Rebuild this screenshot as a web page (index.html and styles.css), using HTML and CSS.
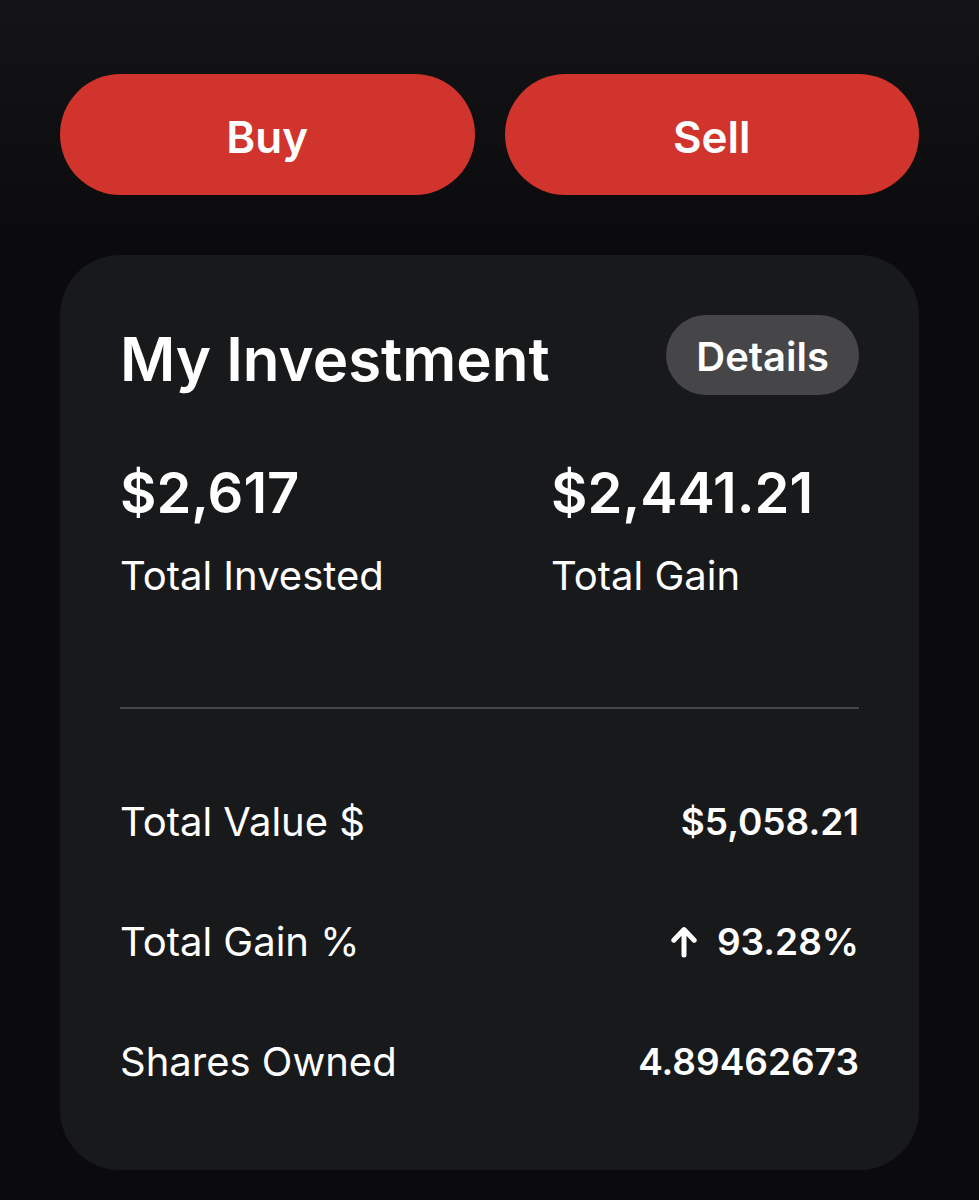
FILE: index.html
```html
<!DOCTYPE html>
<html lang="en">
<head>
<meta charset="UTF-8">
<title>My Investment</title>
<meta name="viewport" content="width=device-width, initial-scale=1.0">

<link rel="stylesheet" href="styles.css">
</head>

<body>

<!-- TRADE BUTTONS -->
<div class="actions">
    <button class="trade-btn">Buy</button>
    <button class="trade-btn">Sell</button>
</div>

<!-- INVESTMENT CARD -->
<div class="card">
    <div class="card-head">
        <h1 class="title">My Investment</h1>
        <button class="details-btn">Details</button>
    </div>

    <div class="totals">
        <div>
            <div class="amount">$2,617</div>
            <div class="label">Total Invested</div>
        </div>
        <div>
            <div class="amount">$2,441.21</div>
            <div class="label">Total Gain</div>
        </div>
    </div>

    <div class="rows">
        <div class="row">
            <span>Total Value $</span>
            <span class="value">$5,058.21</span>
        </div>
        <div class="row">
            <span>Total Gain %</span>
            <span class="value">
                <svg class="arrow" viewBox="0 0 26 32" aria-hidden="true">
                    <path d="M13 29V4M2.8 14.2L13 3.6L23.2 14.2"/>
                </svg>
                93.28%
            </span>
        </div>
        <div class="row">
            <span>Shares Owned</span>
            <span class="value">4.89462673</span>
        </div>
    </div>
</div>

</body>
</html>
```

FILE: styles.css
```css
* {
    box-sizing: border-box;
}

body {
    margin: 0;
    min-height: 100vh;
    padding: 74px 60px 30px;
    font-family: Inter, sans-serif;
    background: #0b0b0d linear-gradient(#141416, #0b0b0d 240px) no-repeat;
    color: white;
}

button {
    border: none;
    font-family: inherit;
    font-weight: 600;
    color: white;
    cursor: pointer;
}

/* TRADE BUTTONS */
.actions {
    display: flex;
    gap: 30px;
}

.trade-btn {
    flex: 1;
    padding: 35px 0 30px;
    border-radius: 61px;
    background: #d0342c;
    font-size: 44px;
    line-height: 56px;
}

/* CARD */
.card {
    margin-top: 60px;
    padding: 60px 60px 78px;
    border-radius: 60px;
    background: #18191b;
}

.card-head {
    display: flex;
    justify-content: space-between;
    align-items: center;
}

.title {
    margin: 0;
    padding-top: 8px;
    font-size: 60px;
    font-weight: 600;
    line-height: 72px;
}

.details-btn {
    padding: 4px 30px 0;
    border-radius: 40px;
    background: #464648;
    font-size: 40px;
    line-height: 76px;
}

/* TOTALS */
.totals {
    display: grid;
    grid-template-columns: 7fr 5fr;
    padding: 58px 0 101px;
    border-bottom: 2px solid #464648;
}

.amount {
    font-size: 56px;
    font-weight: 600;
    line-height: 80px;
}

.label {
    margin-top: 13px;
    font-size: 40px;
    line-height: 60px;
}

/* ROWS */
.rows {
    display: flex;
    flex-direction: column;
    gap: 60px;
    padding-top: 83px;
}

.row {
    display: flex;
    justify-content: space-between;
    font-size: 40px;
    line-height: 60px;
}

.value {
    display: flex;
    align-items: center;
    gap: 20px;
    font-size: 37px;
    font-weight: 600;
}

.arrow {
    width: 26px;
    height: 32px;
    fill: none;
    stroke: white;
    stroke-width: 5;
    stroke-linecap: round;
    stroke-linejoin: round;
}
```
